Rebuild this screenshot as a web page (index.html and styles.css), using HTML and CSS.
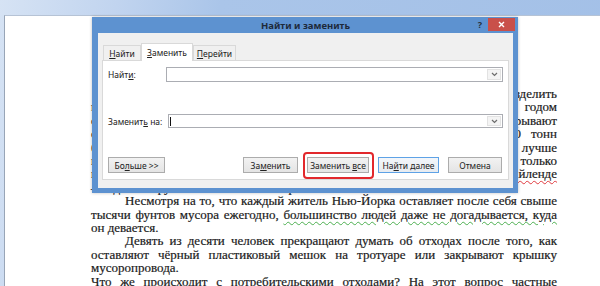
FILE: index.html
```html
<!DOCTYPE html>
<html lang="ru">
<head>
  <meta charset="UTF-8" />
  <title>Найти и заменить</title>
  <link rel="stylesheet" href="styles.css">
</head>
<body>

<div class="page">
  <div class="doc">
    <div class="ln first">Жители Нью-Йорка производят столько мусора, что его трудно разделить</div>
    <div class="ln">на категории и переработать. По данным городских служб, с каждым годом</div>
    <div class="ln">отходов становится всё больше, а свалки за пределами города закрывают</div>
    <div class="ln">одна за другой. Ежедневно город вывозит и сжигает более 12&nbsp;000 тонн</div>
    <div class="ln">бытовых отходов, и власти до сих пор решают, как с ними поступить лучше</div>
    <div class="ln">всего. Раньше почти весь мусор отправлялся на одну свалку, и только</div>
    <div class="ln">в 2001 году закрылась знаменитая свалка Фреш-Киллс на <span class="typo">Стейтен-Айленде</span></div>
    <div class="ln end">— одна из крупнейших свалок в мире.</div>

    <div class="ln first">Несмотря на то, что каждый житель Нью-Йорка оставляет после себя свыше</div>
    <div class="ln">тысячи фунтов мусора ежегодно, <span class="gram">большинство людей даже не догадывается, куда</span></div>
    <div class="ln end">он девается.</div>

    <div class="ln first">Девять из десяти человек прекращают думать об отходах после того, как</div>
    <div class="ln">оставляют чёрный пластиковый мешок на тротуаре или закрывают крышку</div>
    <div class="ln end">мусоропровода.</div>
    <div class="ln">Что же происходит с потребительскими отходами? На этот вопрос частные</div>
  </div>
</div>

<div class="dialog">
  <div class="titlebar">
    <div class="title">Найти и заменить</div>
    <div class="controls">
      <span class="help">?</span>
      <span class="close">
        <svg width="7" height="7" viewBox="0 0 7 7"><path d="M1 1L6 6M6 1L1 6" stroke="#fff" stroke-width="1.4"/></svg>
      </span>
    </div>
  </div>

  <div class="dlg-body">
    <div class="tabs">
      <div class="tab tab-find"><u>Н</u>айти</div>
      <div class="tab tab-replace active"><u>З</u>аменить</div>
      <div class="tab tab-goto"><u>П</u>ерейти</div>
    </div>

    <div class="panel">
      <div class="row row-find">
        <label class="lbl lbl-find">Найт<u>и</u>:</label>
        <div class="combo">
          <div class="field"></div>
          <div class="arrow">
            <svg width="7" height="5" viewBox="0 0 7 5"><path d="M1 1L3.5 3.5L6 1" fill="none" stroke="#6d6d6d" stroke-width="1.2"/></svg>
          </div>
        </div>
      </div>

      <div class="row row-replace">
        <label class="lbl lbl-replace">Заменит<u>ь</u> на:</label>
        <div class="combo">
          <div class="field"><span class="caret"></span></div>
          <div class="arrow">
            <svg width="7" height="5" viewBox="0 0 7 5"><path d="M1 1L3.5 3.5L6 1" fill="none" stroke="#6d6d6d" stroke-width="1.2"/></svg>
          </div>
        </div>
      </div>

      <div class="buttons">
        <button class="btn btn-more">Бо<u>л</u>ьше &gt;&gt;</button>
        <div class="btn-group">
          <button class="btn btn-replace">За<u>м</u>енить</button>
          <button class="btn btn-all marked">Заменить <u>в</u>се</button>
          <button class="btn btn-next default">На<u>й</u>ти далее</button>
          <button class="btn btn-cancel">Отмена</button>
        </div>
      </div>
    </div>
  </div>
</div>

</body>
</html>
```

FILE: styles.css
```css
* {
  box-sizing: border-box;
}
html, body {
  margin: 0;
}
body {
  width: 600px;
  height: 286px;
  overflow: hidden;
  position: relative;
  background: linear-gradient(100deg, #d6e3f4 0%, #c1d4ef 18%, #aac5e9 34%, #a3c0e7 100%);
  font-family: "Noto Sans", "Open Sans", sans-serif;
}

/* document page behind the dialog */
.page {
  margin: 15px 0 0 4px;
  width: 596px;
  height: 271px;
  background: #fff;
  border-left: 1px solid #98a5b7;
  border-top: 1px solid #b6c3d5;
  padding: 71px 0 0 86px;
}
.doc {
  width: 466px;
  font-family: "Liberation Serif", "Times New Roman", serif;
  font-size: 13px;
  line-height: 13.4px;
  color: #1a1a1a;
  -webkit-text-stroke: 0.2px #1a1a1a;
}
.ln {
  text-align: justify;
  text-align-last: justify;
}
.ln.first {
  text-indent: 34px;
}
.ln.end {
  text-align-last: left;
}
.typo {
  text-decoration: underline wavy #e0393e;
  text-decoration-thickness: 1px;
  text-underline-offset: 2px;
}
.gram {
  text-decoration: underline wavy #4caf50;
  text-decoration-thickness: 1px;
  text-underline-offset: 2px;
}

/* dialog */
.dialog {
  position: absolute;
  left: 92px;
  top: 17px;
  width: 426px;
  height: 176px;
  background: #5d92d0;
  padding: 0 5px 5px 6px;
  display: flex;
  flex-direction: column;
  box-shadow: 0 0 3px rgba(0,0,0,0.25);
}
.titlebar {
  height: 16px;
  display: grid;
  grid-template-columns: 1fr auto 1fr;
}
.title {
  grid-column: 2;
  font-size: 9.5px;
  font-weight: bold;
  color: #1d2a3a;
  line-height: 17px;
}
.controls {
  justify-self: end;
  display: flex;
  align-items: flex-start;
  margin-right: -2px;
}
.help {
  font-size: 9px;
  font-weight: bold;
  color: #26323f;
  line-height: 12px;
  margin: 2px 6px 0 0;
}
.close {
  width: 27px;
  height: 13px;
  margin-top: 1px;
  background: #c9504a;
  display: flex;
  align-items: center;
  justify-content: center;
}

.dlg-body {
  flex: 1;
  background: #f0f0f0;
  padding: 11px 4px 8px 4px;
}
.tabs {
  display: flex;
  align-items: flex-end;
  height: 16px;
  padding-left: 1px;
  position: relative;
  z-index: 1;
}
.tab {
  height: 15px;
  font-size: 8.5px;
  color: #222;
  border: 1px solid #d9d9d9;
  border-bottom: none;
  background: #f0f0f0;
  display: flex;
  align-items: center;
  justify-content: center;
}
.tab-find {
  width: 38px;
}
.tab-replace {
  width: 52px;
}
.tab-goto {
  width: 43px;
}
.tab.active {
  height: 18px;
  margin-bottom: -1px;
  background: #fff;
}
.tab u, .lbl u, .btn u {
  text-underline-offset: 1px;
}

.panel {
  height: 120px;
  background: #fff;
  border: 1px solid #d9d9d9;
  padding: 6px 5px 0 5px;
}
.row {
  display: flex;
  align-items: center;
}
.row-find {
  height: 15px;
}
.row-replace {
  height: 14px;
  margin-top: 32px;
}
.lbl {
  font-size: 8.5px;
  color: #222;
}
.lbl-find {
  width: 58px;
}
.lbl-replace {
  width: 60px;
}
.combo {
  flex: 1;
  height: 100%;
  display: flex;
  border: 1px solid #abadb3;
  background: #fff;
}
.field {
  flex: 1;
  display: flex;
  align-items: center;
  padding-left: 1px;
}
.caret {
  width: 1px;
  height: 9px;
  background: #111;
}
.arrow {
  width: 14px;
  margin: 1px;
  border: 1px solid #e2e2e2;
  background: #f4f4f4;
  display: flex;
  align-items: center;
  justify-content: center;
}

.buttons {
  display: flex;
  margin-top: 29px;
  padding-right: 1px;
}
.btn-group {
  margin-left: auto;
  display: flex;
  gap: 9px;
}
.btn {
  height: 16px;
  padding: 0;
  font-family: "Noto Sans", "Open Sans", sans-serif;
  font-size: 8.5px;
  color: #222;
  background: linear-gradient(#f2f2f2, #e4e4e4);
  border: 1px solid #acacac;
  border-radius: 0;
  position: relative;
}
.btn-more {
  width: 57px;
}
.btn-replace {
  width: 55px;
}
.btn-all {
  width: 62px;
}
.btn-next {
  width: 61px;
}
.btn-cancel {
  width: 54px;
}
.btn.default {
  border-color: #5ea2e6;
  background: linear-gradient(#f3f6fa, #e7ebf0);
}
/* red highlight drawn round the button */
.btn.marked::after {
  content: "";
  position: absolute;
  left: -5px;
  right: -6px;
  top: -6px;
  bottom: -7px;
  border: 2px solid #e2282c;
  border-radius: 4px;
}
```
